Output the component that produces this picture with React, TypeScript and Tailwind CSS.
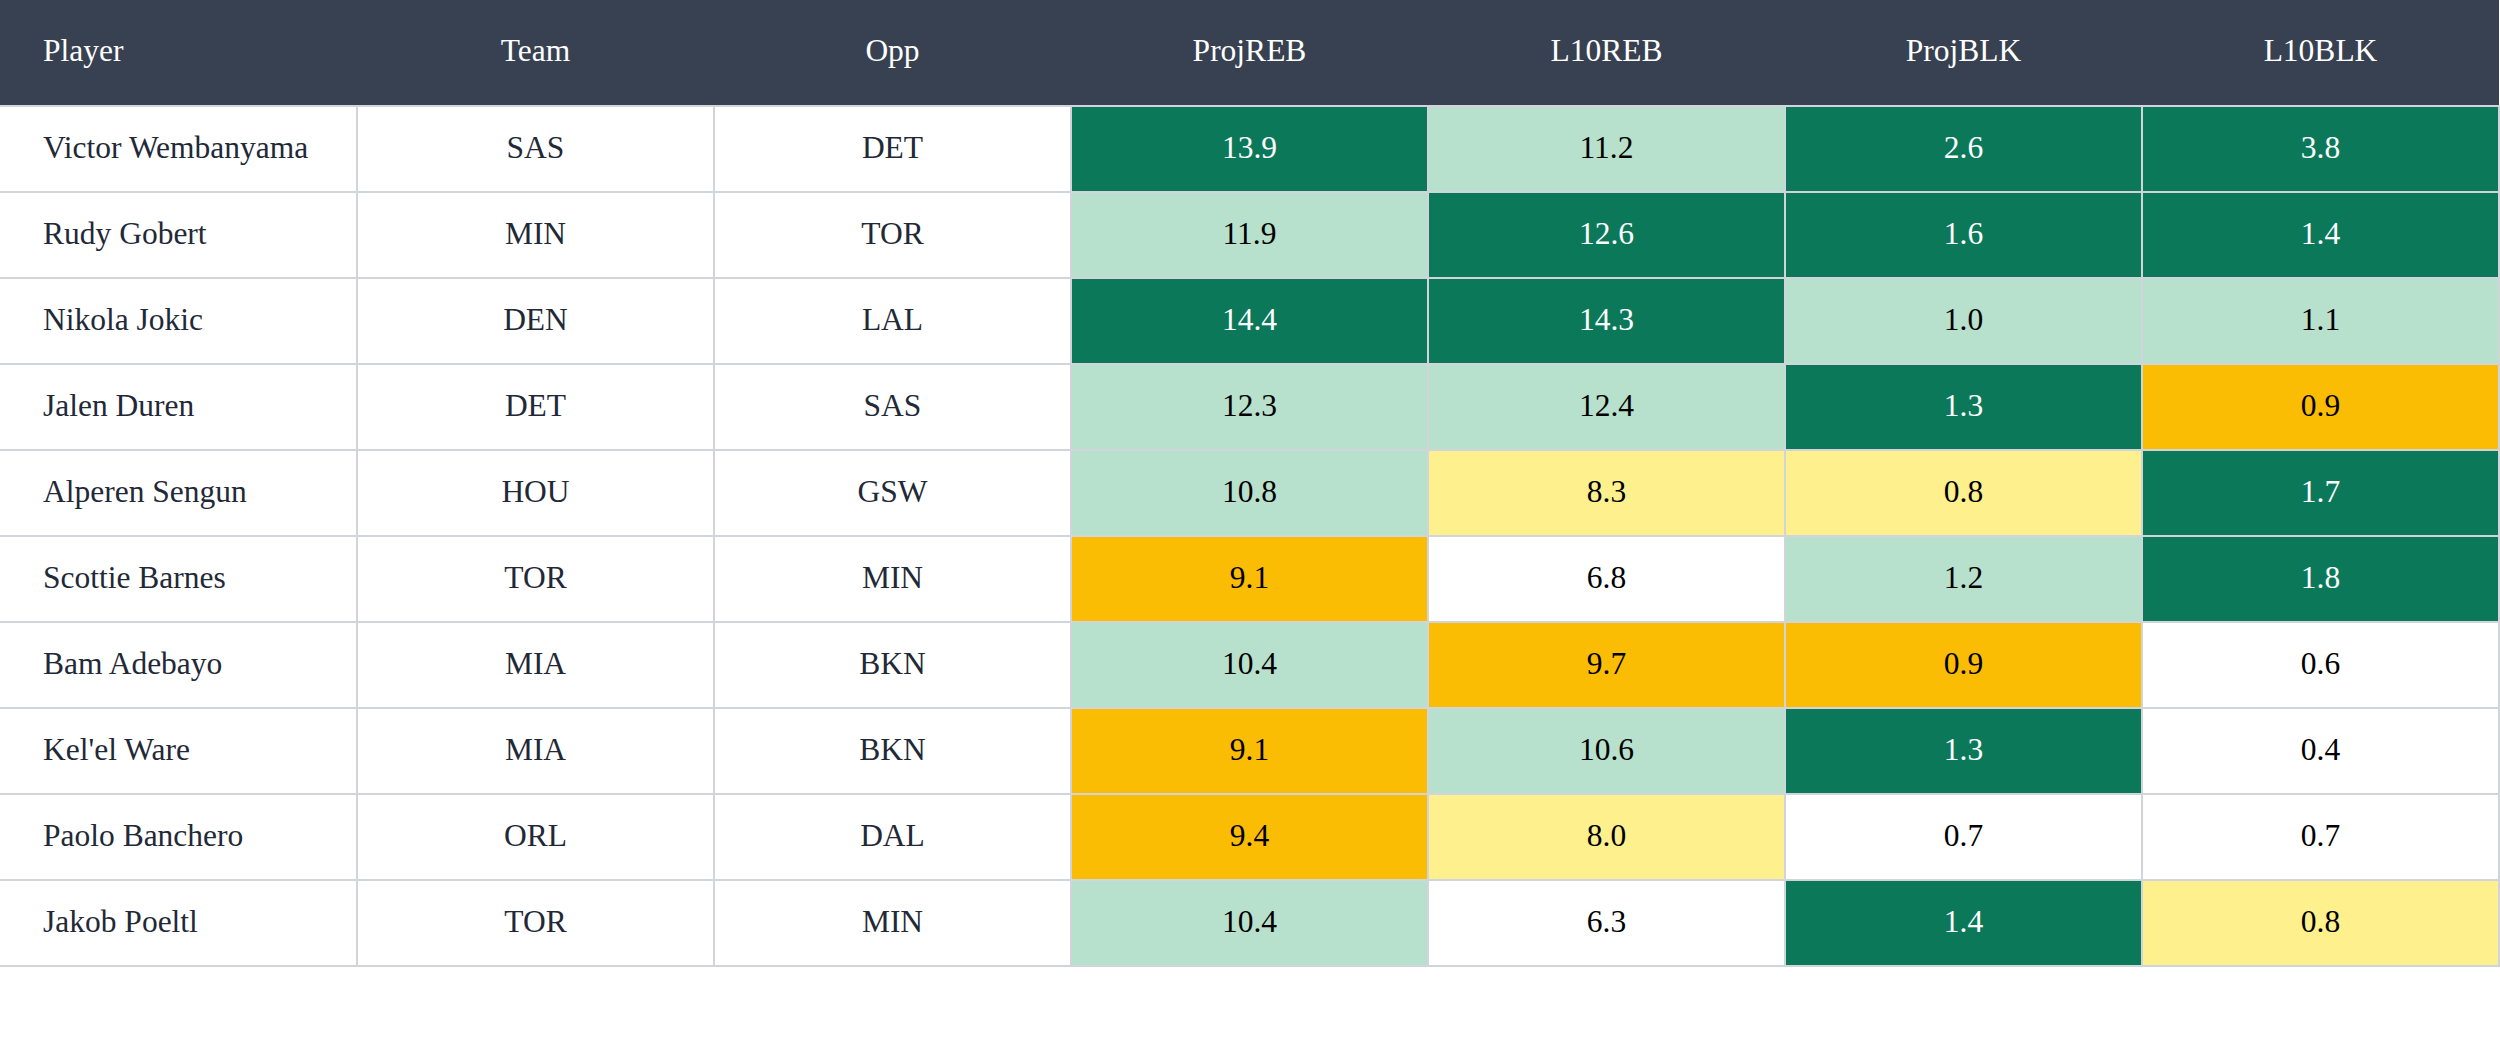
import React from "react";

type Tone = "dark" | "light" | "orange" | "yellow" | "none";

type Row = {
  player: string;
  team: string;
  opp: string;
  cells: [string, Tone][];
};

const ROWS: Row[] = [
  { player: "Victor Wembanyama", team: "SAS", opp: "DET", cells: [["13.9", "dark"], ["11.2", "light"], ["2.6", "dark"], ["3.8", "dark"]] },
  { player: "Rudy Gobert", team: "MIN", opp: "TOR", cells: [["11.9", "light"], ["12.6", "dark"], ["1.6", "dark"], ["1.4", "dark"]] },
  { player: "Nikola Jokic", team: "DEN", opp: "LAL", cells: [["14.4", "dark"], ["14.3", "dark"], ["1.0", "light"], ["1.1", "light"]] },
  { player: "Jalen Duren", team: "DET", opp: "SAS", cells: [["12.3", "light"], ["12.4", "light"], ["1.3", "dark"], ["0.9", "orange"]] },
  { player: "Alperen Sengun", team: "HOU", opp: "GSW", cells: [["10.8", "light"], ["8.3", "yellow"], ["0.8", "yellow"], ["1.7", "dark"]] },
  { player: "Scottie Barnes", team: "TOR", opp: "MIN", cells: [["9.1", "orange"], ["6.8", "none"], ["1.2", "light"], ["1.8", "dark"]] },
  { player: "Bam Adebayo", team: "MIA", opp: "BKN", cells: [["10.4", "light"], ["9.7", "orange"], ["0.9", "orange"], ["0.6", "none"]] },
  { player: "Kel'el Ware", team: "MIA", opp: "BKN", cells: [["9.1", "orange"], ["10.6", "light"], ["1.3", "dark"], ["0.4", "none"]] },
  { player: "Paolo Banchero", team: "ORL", opp: "DAL", cells: [["9.4", "orange"], ["8.0", "yellow"], ["0.7", "none"], ["0.7", "none"]] },
  { player: "Jakob Poeltl", team: "TOR", opp: "MIN", cells: [["10.4", "light"], ["6.3", "none"], ["1.4", "dark"], ["0.8", "yellow"]] },
];

const TONE: Record<Tone, string> = {
  dark: "bg-[#0b7959] text-white",
  light: "bg-[#b7e1cd] text-black",
  orange: "bg-[#fbbc04] text-black",
  yellow: "bg-[#fef08d] text-black",
  none: "bg-white text-black",
};

const HEADERS = ["Player", "Team", "Opp", "ProjREB", "L10REB", "ProjBLK", "L10BLK"];

export default function App() {
  return (
    <div className="min-h-[1050px] w-[2500px] bg-white font-['Liberation_Serif',serif] text-[31.5px]">
      <table className="w-full table-fixed border-collapse">
        <thead>
          <tr className="h-[106px] bg-[#374151] text-white">
            {HEADERS.map((h, i) => (
              <th
                key={h}
                className={`border-b-2 border-[#d1d5db] pb-[4px] font-normal ${i === 0 ? "pl-[43px] text-left" : "text-center"}`}
              >
                {h}
              </th>
            ))}
          </tr>
        </thead>
        <tbody>
          {ROWS.map((r) => (
            <tr key={r.player} className="h-[86px]">
              <td className="border-2 border-l-0 border-[#d1d5db] pb-[3px] pl-[43px] text-[#1f2937]">{r.player}</td>
              <td className="border-2 border-[#d1d5db] pb-[3px] text-center text-[#1f2937]">{r.team}</td>
              <td className="border-2 border-[#d1d5db] pb-[3px] text-center text-[#1f2937]">{r.opp}</td>
              {r.cells.map(([v, t], i) => (
                <td key={i} className={`border-2 border-[#d1d5db] pb-[3px] text-center ${TONE[t]}`}>
                  {v}
                </td>
              ))}
            </tr>
          ))}
        </tbody>
      </table>
    </div>
  );
}
